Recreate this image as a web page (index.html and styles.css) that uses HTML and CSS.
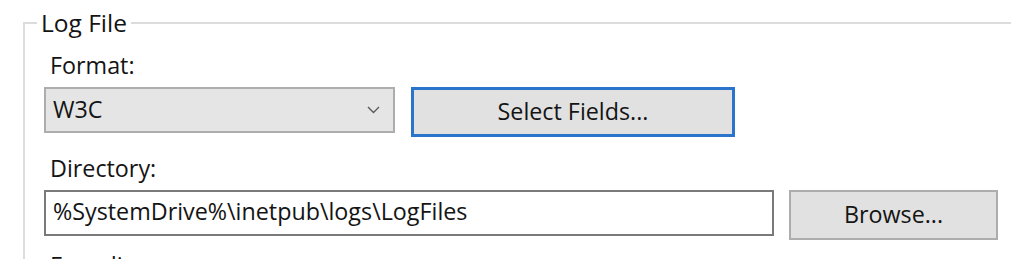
FILE: index.html
```html
<!DOCTYPE html>
<html lang="en">
<head>
<meta charset="utf-8">
<title>Log File</title>
<link rel="stylesheet" href="styles.css">
</head>
<body>
<div class="clip">
  <fieldset class="group">
    <legend class="group-title">Log File</legend>
    <div class="label">Format:</div>
    <div class="row">
      <div class="combo">
        <span class="combo-value">W3C</span>
        <svg class="chev" width="13" height="8" viewBox="0 0 13 8"><polyline points="1,1 6.5,6.5 12,1" fill="none" stroke="#5a5a5a" stroke-width="1.4"/></svg>
      </div>
      <button class="btn btn-default btn-fields">Select Fields...</button>
    </div>
    <div class="label label-dir">Directory:</div>
    <div class="row">
      <div class="textbox">%SystemDrive%\inetpub\logs\LogFiles</div>
      <button class="btn btn-browse">Browse...</button>
    </div>
    <div class="label label-enc">Encoding:</div>
  </fieldset>
</div>
</body>
</html>
```
FILE: styles.css
```css
html, body {
  margin: 0;
  padding: 0;
  background: #ffffff;
}
body {
  font-family: "Open Sans", "Noto Sans", "Liberation Sans", sans-serif;
  font-size: 23.3px;
  color: #141414;
  overflow: hidden;
  width: 1024px;
  height: 278px;
}
.clip {
  height: 259px;
  overflow: hidden;
  padding-top: 7px;
  box-sizing: border-box;
}
.group {
  margin: 0 0 0 23px;
  width: 988px;
  box-sizing: border-box;
  border: none;
  border-top: 2px solid #dcdcdc;
  border-left: 2px solid #dcdcdc;
  padding: 11px 0 0 19px;
  min-height: 400px;
}
.group-title {
  font-size: 24.5px;
  line-height: 32px;
  padding: 0 4px;
  margin-left: -7px;
}
.label {
  font-size: 23.3px;
  line-height: 30px;
  margin-left: 6px;
  margin-bottom: 7px;
}
.label-dir {
  margin-top: 16px;
}
.label-enc {
  margin-top: 10px;
}
.row {
  display: flex;
  align-items: flex-start;
}
.combo {
  width: 351px;
  height: 46px;
  box-sizing: border-box;
  border: 2px solid #adadad;
  background: #e5e5e5;
  display: flex;
  align-items: center;
  justify-content: space-between;
  padding: 0 13px 0 7px;
}
.combo-value {
  line-height: 30px;
  margin-top: -3px;
}
.chev {
  display: block;
}
.btn {
  font-family: inherit;
  font-size: 23.3px;
  color: #141414;
  background: #e1e1e1;
  border: 2px solid #adadad;
  height: 50px;
  box-sizing: border-box;
  padding: 0 0 3px 0;
  margin: 0;
}
.btn-default {
  border-color: #2a74cc;
  border-width: 3px;
}
.btn-fields {
  width: 324px;
  margin-left: 16px;
}
.textbox {
  width: 730px;
  height: 46px;
  box-sizing: border-box;
  border: 2px solid #7a7a7a;
  background: #ffffff;
  padding: 0 0 0 7px;
  line-height: 38px;
  white-space: nowrap;
}
.btn-browse {
  width: 209px;
  margin-left: 15px;
}
```
